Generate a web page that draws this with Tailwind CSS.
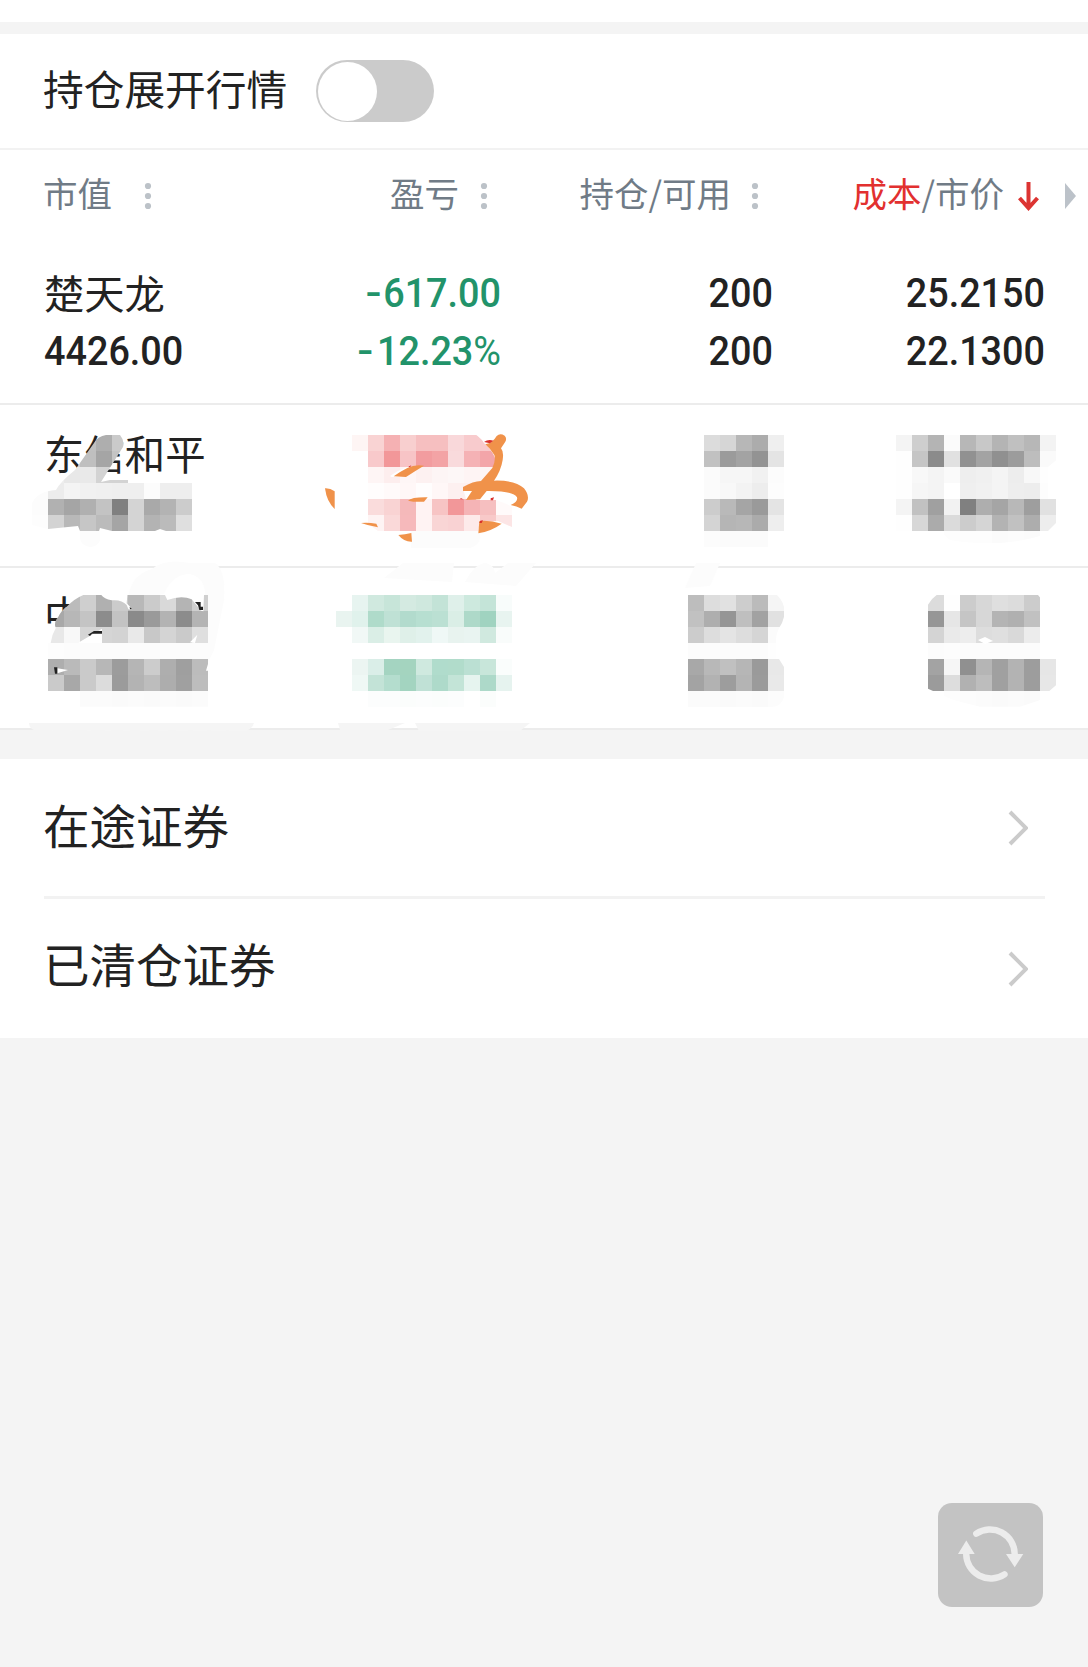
<!DOCTYPE html>
<html lang="zh-CN">
<head>
    <meta charset="UTF-8">
    <meta name="viewport" content="width=device-width, initial-scale=1.0">
    <title>持仓</title>
    <script src="https://cdn.jsdelivr.net/npm/@tailwindcss/browser@4"></script>
</head>
<body class="bg-[#f4f4f4] text-[#222] font-['Noto_Sans_CJK_SC',sans-serif] w-[1088px] h-[1667px] relative overflow-hidden">
    <div class="h-[22px] bg-white"></div>

    <!-- Quote toggle -->
    <div class="mt-3 h-[116px] bg-white border-b-2 border-[#f2f2f2] flex items-center pl-[43px]">
        <span class="text-[40.7px] leading-none -mt-1.5">持仓展开行情</span>
        <button class="ml-[29px] w-[118px] h-[62px] rounded-full bg-[#cbcbcb] p-0.5 flex items-center">
            <span class="w-[59px] h-[59px] rounded-full bg-white"></span>
        </button>
    </div>

    <!-- Holdings -->
    <div class="relative bg-white">
        <div class="h-[87px] grid grid-cols-[187px_229px_272px_273px_1fr] pl-[43px] items-center text-[34.5px] leading-none text-[#707b86] whitespace-nowrap">
            <div class="flex items-center">
                <span class="-mt-0.5">市值</span>
                <svg class="ml-8 mt-1 w-2 h-7" viewBox="0 0 8 28" fill="#bcc2c8"><circle cx="4" cy="4" r="3.1"/><circle cx="4" cy="14" r="3.1"/><circle cx="4" cy="24" r="3.1"/></svg>
            </div>
            <div class="flex items-center justify-end">
                <span class="-mt-0.5">盈亏</span>
            </div>
            <div class="flex items-center justify-end">
                <svg class="ml-[21px] mr-auto mt-1 w-2 h-7" viewBox="0 0 8 28" fill="#bcc2c8"><circle cx="4" cy="4" r="3.1"/><circle cx="4" cy="14" r="3.1"/><circle cx="4" cy="24" r="3.1"/></svg>
                <span class="-mt-0.5">持仓/可用</span>
            </div>
            <div class="flex items-center justify-end">
                <svg class="ml-5 mr-auto mt-1 w-2 h-7" viewBox="0 0 8 28" fill="#bcc2c8"><circle cx="4" cy="4" r="3.1"/><circle cx="4" cy="14" r="3.1"/><circle cx="4" cy="24" r="3.1"/></svg>
                <span class="-mt-0.5"><span class="text-[#e2302f]">成本</span>/市价</span>
            </div>
            <div class="flex items-center pt-1">
                <svg class="ml-3.5 w-[21px] h-[30px]" viewBox="0 0 21 30" fill="none" stroke="#dc3432" stroke-width="4"><path d="M10.5 1V27M1.5 17L10.5 27L19.5 17"/></svg>
                <svg class="ml-[26px] w-[11px] h-[26px]" viewBox="0 0 11 26" fill="#bcc2c9"><path d="M0 0L11 13L0 26Z"/></svg>
            </div>
        </div>

        <div class="h-[168px] border-b-2 border-[#ececec] grid grid-cols-[186px_271px_272px_272px] pl-11 pt-[27px] text-[41.2px] leading-[58px] whitespace-nowrap">
            <div>
                <div class="text-[40.3px] -mt-px mb-px">楚天龙</div>
                <div class="font-[Roboto] font-medium origin-left scale-x-[0.917]">4426.00</div>
            </div>
            <div class="text-right text-[#22936a] font-[Roboto] font-medium origin-right scale-x-[0.917]">
                <div><span class="inline-block scale-x-125 mr-1">-</span>617.00</div>
                <div><span class="inline-block scale-x-125 mr-1.5">-</span>12.23<span class="font-normal">%</span></div>
            </div>
            <div class="text-right font-[Roboto] font-medium origin-right scale-x-[0.917]">
                <div>200</div>
                <div>200</div>
            </div>
            <div class="text-right font-[Roboto] font-medium origin-right scale-x-[0.917]">
                <div>25.2150</div>
                <div>22.1300</div>
            </div>
        </div>

        <div class="h-[163px] border-b-2 border-[#ececec] pl-11 pt-[19px] text-[40.4px] leading-[58px]">东信和平</div>
        <div class="h-[162px] border-b-2 border-[#ececec] pl-11 pt-[17px] text-[40.4px] leading-[58px]">中</div>

        <!-- Privacy smudges over the two lower holdings -->
        <svg id="smudge" class="absolute left-0 top-[253px] w-[1088px] h-[360px]" viewBox="0 403 1088 360">
            <defs>
                <clipPath id="clipName1"><path d="M106 435H120Q125 441 123 447L101 482L110 480H160L175 483H192V531H166L160 529L155 531H112L100 528L99 531H80L78 526L48 529L32 525V503Q38 491 56 490Q60 482 75 470L94 443Q98 436 106 435Z"/></clipPath>
                <clipPath id="clipPnl1"><path d="M340 430H468Q480 436 484 443Q492 450 495 458Q496 466 492 470L484 484L463 488L466 499H498Q506 503 512 507V527L498 521L480 522L478 531H378L368 524H340Z"/></clipPath>
                <clipPath id="clipCost1"><path d="M890 430H1060V457L1048 467V499H1056V523L1048 531L1040 536Q1000 548 950 540L940 531H890Z"/></clipPath>
                <clipPath id="clipName2"><path transform="translate(0 560) scale(.33333)" d="M250 105H304Q312 116 335 121Q365 118 380 135L386 149L396 146L380 130L382 105H495L502 120Q545 105 575 118L603 152L610 154L612 105H624V312L618 332H624V440H240V393H144V297H100V249H152Q155 225 167 205Q160 185 175 170Q185 150 200 140Q225 115 250 105ZM240 245L235 249H306V206ZM570 247L592 224L585 249ZM172 325L204 330L172 340Z" clip-rule="evenodd"/></clipPath>
                <clipPath id="clipQty2"><path d="M680 595H777Q789 607 782 623Q776 632 776 640V659H779L784 667V697Q782 707 770 707H680Z"/></clipPath>
                <clipPath id="clipCost2"><path transform="translate(660 560) scale(.33333)" d="M830 105H1134L1142 115V297H1188V376L1168 393H1140V420L1080 440H960L880 420L804 386V134Q815 115 830 105Z"/></clipPath>
            </defs>

            <!-- faint wipes -->
            <g fill="#fcfcfc">
                <path d="M80 530H100V540Q98 547 90 547Q81 546 80 538Z"/>
                <path d="M128 600Q130 575 152 569Q165 558 190 563H215Q226 570 224 600L214 650L205 668V597Q206 578 190 574Q172 574 164 594Z"/>
                <path d="M384 578L403 563H454L452 582ZM465 582Q475 563 486 563Q494 565 495 573L508 563H536L516 586Z"/>
                <path d="M696 563H720L710 586L685 588Z"/>
                <path d="M411 531H480Q482 545 470 548H411Z"/>
            </g>
            <g fill="#f5f5f5">
                <path d="M29 723H254Q252 729 246 731L34 730Q29 728 29 723Z"/>
                <path d="M338 723H405L388 730H340ZM415 723H530L520 731H419Z"/>
            </g>

            <g id="tiles"></g>

            <!-- orange scribble left visible around the pink tiles -->
            <g transform="translate(300 400) scale(.33333)">
                <path fill="#fff" d="M548 274Q640 272 651 292L630 316L588 300H527Z"/>
                <path fill="#fff" d="M270 228Q290 212 325 200L300 231H275Z"/>
                <g fill="#f0924a">
                    <path d="M75 265Q90 264 104 274V327Q80 305 75 265Z"/>
                    <path d="M281 229Q300 215 322 204Q345 192 372 197Q350 210 318 231Z"/>
                    <path d="M324 302Q335 291 383 292L372 305Q345 307 324 302Z"/>
                    <path d="M183 369Q205 367 229 371L234 382Q205 377 183 369Z"/>
                    <path d="M295 405Q315 403 334 399L336 425Q312 426 295 405Z"/>
                    <path d="M556 133L572 128Q585 118 590 108Q600 98 614 107Q622 115 615 127L603 145Q612 155 608 180Q603 212 582 242Q645 240 672 265Q690 288 681 305L665 326Q650 318 632 315Q655 305 651 292Q640 272 560 273L540 298L498 300L516 273H489V261Q520 243 543 243L577 204Q588 180 583 165Q570 145 556 133Z"/>
                    <path d="M538 363Q570 360 605 371Q575 393 535 400Z"/>
                </g>
                <g fill="#d9302c">
                    <path d="M552 126Q565 116 580 122L570 130Z"/>
                    <path d="M572 295L582 292L579 301H572ZM541 362L549 361L545 369H538ZM482 294L490 298H481ZM325 200L334 196L330 202Z"/>
                </g>
            </g>

            <!-- pieces of the second name between the tiles -->
            <g transform="translate(0 560) scale(.33333)" fill="#222">
                <path d="M264 224L282 213H306V221H276L270 228Z"/>
                <path d="M585 126H602V140H609V150H598L594 136Z"/>
                <path d="M162 322H172V341H165Z"/>
                <path d="M389 141L396 146L390 148Z"/>
            </g>
        </svg>
    </div>

    <!-- Links -->
    <div class="mt-[29px] bg-white pl-[43px] text-[46.5px] leading-none">
        <div class="h-[140px] mr-[43px] border-b-3 border-[#f2f2f2] flex items-center justify-between pr-[17px] ml-px">
            <span class="-mt-1.5 -ml-px">在途证券</span>
            <svg class="w-5 h-9" viewBox="0 0 20 36" fill="none" stroke="#cbcbcb" stroke-width="4"><path d="M2 2L18 18L2 34"/></svg>
        </div>
        <div class="h-[139px] mr-[43px] flex items-center justify-between pr-[17px]">
            <span class="-mt-2.5">已清仓证券</span>
            <svg class="w-5 h-9 mt-px" viewBox="0 0 20 36" fill="none" stroke="#cbcbcb" stroke-width="4"><path d="M2 2L18 18L2 34"/></svg>
        </div>
    </div>

    <!-- Refresh -->
    <button class="absolute left-[938px] top-[1503px] w-[105px] h-[104px] rounded-[14px] bg-[#c3c3c3]">
        <svg class="w-[105px] h-[104px]" viewBox="0 0 105 104" fill="none" stroke="#ececec" stroke-width="6.4" stroke-linecap="round">
            <path d="M38.3 30.7A24.6 24.6 0 0 1 76.7 51"/>
            <path d="M66.5 71.3A24.6 24.6 0 0 1 28.2 51"/>
            <path d="M68 51H85.3L76.7 64.3ZM20 51H36.7L28.3 37.5Z" fill="#ececec" stroke="none"/>
        </svg>
    </button>

    <script>
        // Each line is: x y colour colour ... ("-" leaves a tile out, two digits are a grey)
        const blocks = {
            clipName1: `
                64 435 c0 c0 ae ca
                64 451 d0 bf a5 c4
                48 467 ee e8 e9 d3 d3
                32 483 fc ec f4 f1 f0 ef ef fc ee ee fb
                32 499 fc b1 a5 b0 c3 80 d4 a9 b3 cc
                32 515 fd d3 b8 c6 bb a5 d4 b3 bb df`,
            clipPnl1: `
                352 435 fef5f4 f9d3d3 f5b1b3 f8cfcf f6bfc0 f6bfc0 f9d8da f8cbcd f8c9cb
                368 451 f8c9cb f29799 f7c4c6 f29c9f f3a3a5 f9dadc f5b2b5 f3a5a9
                368 467 fef5f5 fdeeee fef6f6 fdf1f1 fdf5f5 fdf7f7 fef4f4 fdf5f5
                368 483 fffdfd fffafa fff7f7 fffdfd fff7f7 fdf0f0 fdf0f0
                368 499 fadcdc f9d3d3 f5b9ba fff3f3 f7c4c4 f29799 f5b4b6 f6bfc0 fffafa
                368 515 fef4f4 fad9d9 f6b9bb fff3f3 f9d5d5 f9d2d3 fdeaea f8c9c9 fce5e5`,
            clipQty1: `
                704 435 dc d6 b7 ac ef
                704 451 c1 9b a3 93 e4
                704 467 fb f6 f6 f1 fc
                704 483 fb f8 f3 ed fd
                704 499 cc b9 a5 9a e4
                704 515 d4 b5 b7 ab ee
                704 531 fc fb fb fb`,
            clipCost1: `
                896 435 f4 ce b4 fb b7 c8 b4 c0 b7 f3
                896 451 fe c5 8b e1 91 a3 90 9c bd fa
                896 467 fe f8 f4 fa ee f0 f4 ed f8 fe
                896 483 fe f6 f4 ff ef f1 f4 ee ed fd
                896 499 f4 c1 a0 f2 80 ae a5 b8 9e e1
                896 515 fe d7 ab db cc d5 b3 c1 ad ed
                944 531 fd fd fd fb fc fb`,
            clipName2: `
                48 595 bb bb cf b0 cb b8 cb d9 b4 cf
                48 611 a8 b7 c4 8c c3 8a 9a b3 8c b4
                48 627 e8 f8 d5 d5 d3 e9 c8 d4 ca df
                48 643 fd fc fc fc fc fc fc fc fc fc
                32 659 fb ae ba ca b7 9c b5 cc ae 9f bc
                48 675 ca a8 ca dc 9b b3 bd ad a0 bd
                80 691 fb fb fa fb fa fb fa fb`,
            clipPnl2: `
                352 595 e7f4f0 d0e9df c7e5d9 d4eae1 cfe8de c3e3d7 dff0ea cde9de c4e4d8 f8fcfb
                336 611 e9f4f0 e0f2ec afdbca bfe1d5 b2dbcd b7dfd1 bbe0d3 daeee6 aed9c9 a0d3c0 e8f4f0
                352 627 f1f8f6 daeee6 e9f5ef dff0e9 e2f2ed eff8f6 e8f3ef e9f4f1 d0e9df f9fcfb
                352 659 ecf5f2 daeee8 a4d4c1 a4d4bf cfe9df b0dccc b1dccb bbe0d3 c8e6da fafdfc
                352 675 eff8f5 c3e3d7 b4ddce a3d4c0 c0e1d6 aedaca c3e4d7 e6f4ef add9c9 e6f3ef
                368 691 fcfdfd fcfdfd fbfdfc fcfdfd fbfdfc fcfdfd - fbfdfc`,
            clipQty2: `
                688 595 bd dd e1 cd bb f5
                688 611 c1 ae 95 bf a2 e1
                688 627 cc dd e4 dd d5 fb
                688 643 fc fc fc fc fc fe
                688 659 a8 b8 c0 b6 9a e8
                688 675 a3 b2 9d b4 9b e9
                688 691 fb fb fa fb fa fc`,
            clipCost2: `
                928 595 dc fe cc d7 df dc cc
                928 611 96 e6 c5 d7 b4 b0 c1
                928 627 d4 ea ed dd df d9 ec
                928 643 fc fd fc fc fc fc fc
                928 659 a3 f6 90 b5 a0 b3 9d e6
                928 675 9b dd b1 bd a0 b3 9d e7
                944 691 fd fc fb fa fb fa`
        };

        const ns = 'http://www.w3.org/2000/svg';
        const tiles = document.getElementById('tiles');
        for (const [clip, rows] of Object.entries(blocks)) {
            const g = document.createElementNS(ns, 'g');
            if (document.getElementById(clip)) g.setAttribute('clip-path', `url(#${clip})`);
            g.setAttribute('shape-rendering', 'crispEdges');
            rows.trim().split('\n').forEach((line) => {
                const [x, y, ...colors] = line.trim().split(' ');
                colors.forEach((c, i) => {
                    if (c === '-') return;
                    const r = document.createElementNS(ns, 'rect');
                    r.setAttribute('x', +x + i * 16);
                    r.setAttribute('y', y);
                    r.setAttribute('width', 16);
                    r.setAttribute('height', 16);
                    r.setAttribute('fill', '#' + (c.length === 2 ? c.repeat(3) : c));
                    g.appendChild(r);
                });
            });
            tiles.appendChild(g);
        }
        // small uncovered spot in the last cost block
        const spot = document.createElementNS(ns, 'path');
        spot.setAttribute('d', 'M978 640L985 637L993 641L985 644Z');
        spot.setAttribute('fill', '#fff');
        tiles.appendChild(spot);
    </script>
</body>
</html>
